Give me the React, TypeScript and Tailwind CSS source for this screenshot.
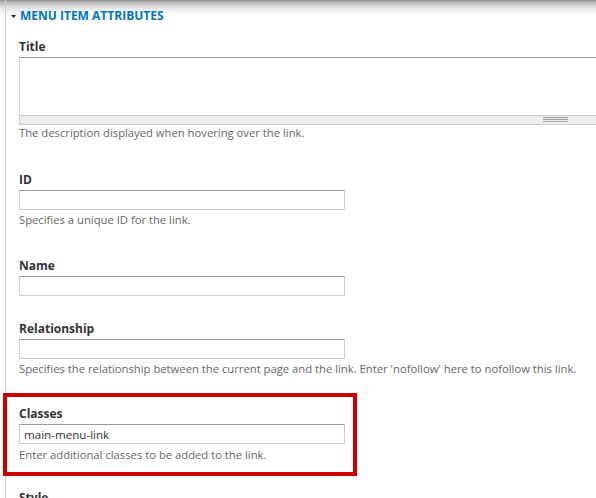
import React from "react";

function Label({ children }: { children: React.ReactNode }) {
  return (
    <div className="text-[12px] leading-[16px] font-bold text-[#333333]">{children}</div>
  );
}

function Desc({ children, className = "" }: { children: React.ReactNode; className?: string }) {
  return (
    <div className={"text-[11.25px] leading-[14px] text-[#666666] " + className}>{children}</div>
  );
}

function TextInput({ value = "" }: { value?: string }) {
  return (
    <input
      readOnly
      value={value}
      className="block mt-[2px] w-[326px] h-[20px] border border-[#cccccc] border-t-[#999999] px-[4px] text-[11.6px] text-[#333333] outline-none bg-white font-['Open_Sans',sans-serif]"
    />
  );
}

export default function App() {
  return (
    <div className="w-[596px] h-[498px] overflow-hidden bg-white bg-[linear-gradient(to_bottom,#8c8c8c_0px,#b4b4b4_2px,#e6e6e6_8px,#ffffff_15px)] font-['Open_Sans',sans-serif]">
      <div className="ml-[5px] h-full border-l border-[#cccccc] pt-[8px]">
        <div className="flex items-center">
          <svg width="14" height="15" viewBox="0 0 14 15" className="shrink-0">
            <path d="M5 7 L10 7 L7.5 10 Z" fill="#222" />
          </svg>
          <span className="text-[12px] leading-[15px] font-bold text-[#0074bd] uppercase">
            Menu item attributes
          </span>
        </div>

        <div className="pl-[13px]">
          {/* Title */}
          <div className="mt-[16px]">
            <Label>Title</Label>
            <div className="mt-[2px] w-[600px]">
              <textarea
                readOnly
                className="block w-full h-[59px] border border-[#cccccc] border-t-[#999999] resize-none outline-none bg-white"
              />
              <div className="h-[9px] bg-[#eeeeee] border border-t-0 border-[#cccccc] relative">
                <svg width="25" height="6" viewBox="0 0 25 6" className="absolute left-[523px] top-[1px]">
                  <line x1="0" y1="0.5" x2="25" y2="0.5" stroke="#a0a0a0" />
                  <line x1="0" y1="2.5" x2="25" y2="2.5" stroke="#a0a0a0" />
                  <line x1="0" y1="4.5" x2="25" y2="4.5" stroke="#a0a0a0" />
                </svg>
              </div>
            </div>
            <Desc className="mt-[1px]">The description displayed when hovering over the link.</Desc>
          </div>

          {/* ID */}
          <div className="mt-[32px]">
            <Label>ID</Label>
            <TextInput />
            <Desc className="mt-[3px]">Specifies a unique ID for the link.</Desc>
          </div>

          {/* Name */}
          <div className="mt-[31px]">
            <Label>Name</Label>
            <TextInput />
          </div>

          {/* Relationship */}
          <div className="mt-[25px]">
            <Label>Relationship</Label>
            <TextInput />
            <Desc className="mt-[3px]">
              Specifies the relationship between the current page and the link. Enter 'nofollow' here to nofollow this link.
            </Desc>
          </div>

          {/* Classes (highlighted) */}
          <div className="mt-[17px] -ml-[16px] w-[354px] border-4 border-[#cc0000] pl-[12px] pt-[9px] pb-[10px]">
            <Label>Classes</Label>
            <div className="mt-[1px]">
              <TextInput value="main-menu-link" />
            </div>
            <Desc className="mt-[4px]">Enter additional classes to be added to the link.</Desc>
          </div>

          {/* Style */}
          <div className="mt-[14px]">
            <Label>Style</Label>
          </div>
        </div>
      </div>
    </div>
  );
}
